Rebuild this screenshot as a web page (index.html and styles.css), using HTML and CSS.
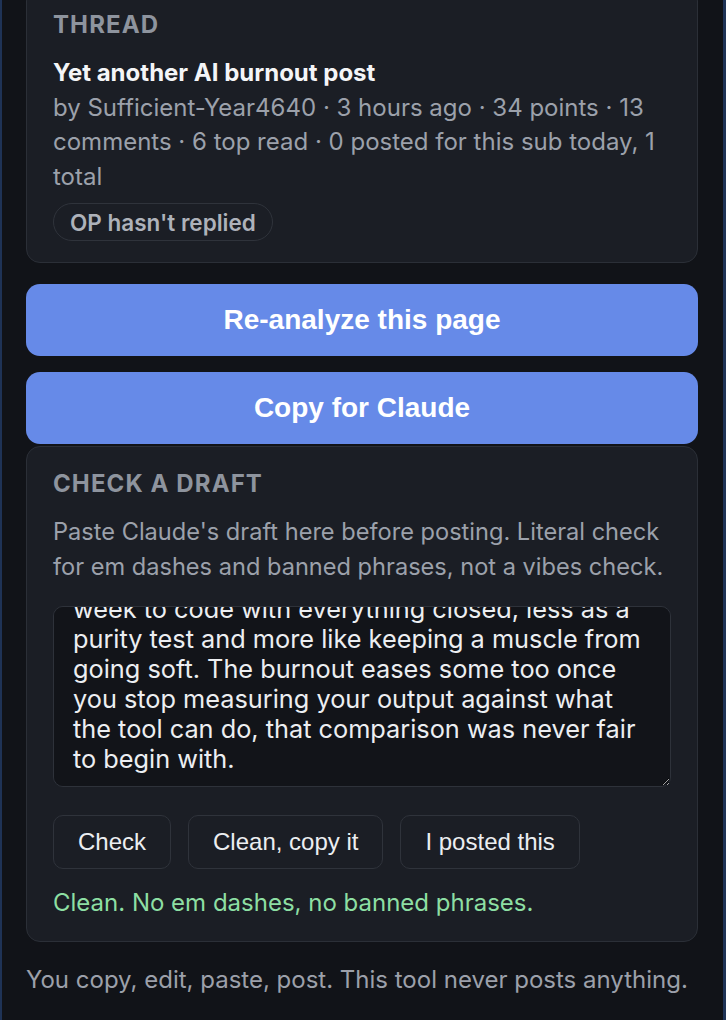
FILE: index.html
```html
<!DOCTYPE html>
<html lang="en">

<head>
    <meta charset="UTF-8">
    <meta name="viewport" content="width=device-width, initial-scale=1.0">
    <title>Reply helper</title>
    <link rel="stylesheet" href="styles.css">
</head>

<body>
    <div class="panel">
        <!-- current thread -->
        <section class="card">
            <h2 class="label">Thread</h2>
            <div class="thread-title">Yet another AI burnout post</div>
            <div class="meta">by Sufficient-Year4640 · 3 hours ago · 34 points · 13 comments · 6 top read · 0 posted for this sub today, 1 total</div>
            <span class="pill">OP hasn't replied</span>
        </section>

        <button class="btn-primary">Re-analyze this page</button>
        <button class="btn-primary">Copy for Claude</button>

        <!-- draft checker -->
        <section class="card draft-card">
            <h2 class="label">Check a draft</h2>
            <p class="hint">Paste Claude's draft here before posting. Literal check for em dashes and banned phrases, not a vibes check.</p>
            <textarea class="draft" spellcheck="false">Same here, the part that wore me down was never the tool itself, it was how fast the bar moved for what a normal day of work looks like. What helped a bit was keeping one evening a week to code with everything closed, less as a purity test and more like keeping a muscle from going soft. The burnout eases some too once you stop measuring your output against what the tool can do, that comparison was never fair to begin with.</textarea>
            <div class="actions">
                <button class="btn">Check</button>
                <button class="btn">Clean, copy it</button>
                <button class="btn">I posted this</button>
            </div>
            <div class="status ok">Clean. No em dashes, no banned phrases.</div>
        </section>

        <p class="footnote">You copy, edit, paste, post. This tool never posts anything.</p>
    </div>
    <script src="app.js"></script>
</body>

</html>
```

FILE: styles.css
```css
* {
    padding: 0;
    margin: 0;
    box-sizing: border-box;
}

html {
    background: #111318;
    height: 100%;
}

body {
    min-height: 100%;
    background: #111318;
    border-left: 2px solid #1f3356;
    border-right: 3px solid #1f3356;
    font-family: Inter, "Noto Sans", sans-serif;
    font-size: 24px;
    color: #e8eaee;
    overflow: hidden;
}

/* 面板 */
.panel {
    display: flex;
    flex-direction: column;
    padding: 0 25px 0 24px;
    margin-top: -13px;
}

.card {
    background: #1b1e25;
    border: 1px solid #2b2f37;
    border-radius: 14px;
    padding: 23px 26px 21px;
    display: flex;
    flex-direction: column;
    align-items: flex-start;
}

.label {
    font-size: 24px;
    font-weight: 700;
    letter-spacing: 1.1px;
    line-height: 28px;
    text-transform: uppercase;
    color: #8e949e;
    margin-bottom: 17px;
}

.thread-title {
    font-weight: 700;
    line-height: 34.5px;
    color: #f4f5f7;
}

.meta {
    line-height: 34.5px;
    color: #9ca1ab;
}

.pill {
    margin-top: 9px;
    height: 38px;
    padding: 0 16px;
    display: flex;
    align-items: center;
    border: 1.5px solid #2f333b;
    border-radius: 19px;
    font-size: 22.5px;
    font-weight: 600;
    color: #aeb2ba;
}

/* 主按钮 */
.btn-primary {
    height: 72px;
    margin-top: 21px;
    border: none;
    border-radius: 14px;
    background: #668ae8;
    color: #fff;
    font-family: "Liberation Sans", Arial, sans-serif;
    font-size: 28px;
    font-weight: 700;
}

.btn-primary + .btn-primary {
    margin-top: 16px;
}

.draft-card {
    margin-top: 2px;
    align-items: stretch;
}

.hint {
    font-size: 23.6px;
    line-height: 35px;
    color: #9ca1ab;
    margin-top: -1px;
}

.draft {
    display: block;
    margin-top: 22px;
    width: 100%;
    height: 181px;
    padding: 12px 19px;
    background: #121419;
    border: 1px solid #2e323a;
    border-radius: 10px;
    color: #eceef1;
    font-family: Inter, "Noto Sans", sans-serif;
    font-size: 25.3px;
    line-height: 30px;
    resize: vertical;
    outline: none;
}

.actions {
    display: flex;
    gap: 17px;
    margin-top: 28px;
}

.btn {
    height: 54px;
    padding: 0 24px;
    background: #1b1e25;
    border: 1.5px solid #2f333b;
    border-radius: 10px;
    color: #eceef1;
    font-family: "Liberation Sans", Arial, sans-serif;
    font-size: 24px;
}

.status {
    margin-top: 17px;
    line-height: 34px;
}

.status.ok {
    color: #8ddfa3;
}

.footnote {
    margin-top: 21px;
    line-height: 34px;
    color: #9ca0aa;
}
```

FILE: app.js
```js
// 草稿框滚到底部
var draft = document.querySelector('.draft');
draft.scrollTop = draft.scrollHeight;
```
